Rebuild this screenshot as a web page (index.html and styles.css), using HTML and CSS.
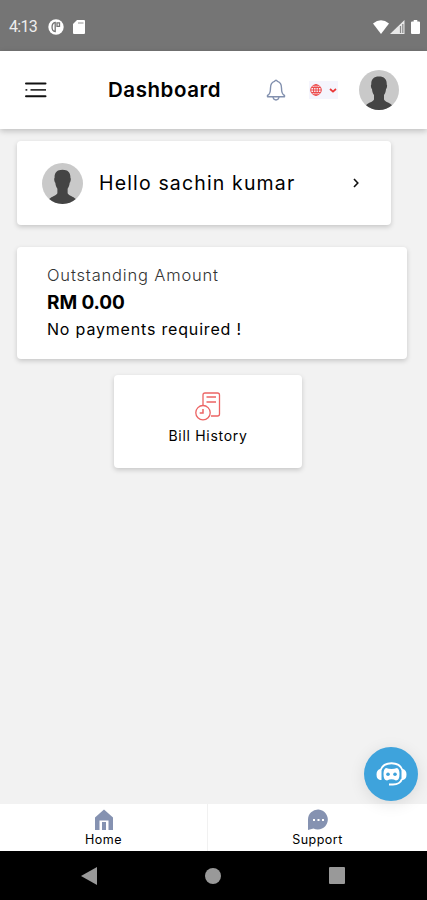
FILE: index.html
```
<!DOCTYPE html>
<html lang="en">
<head>
    <meta charset="UTF-8">
    <meta name="viewport" content="width=device-width, initial-scale=1.0">
    <title>Dashboard</title>
    <link rel="stylesheet" href="styles.css">
</head>
<body>
    <svg width="0" height="0" class="defs">
        <symbol id="avatar" viewBox="0 0 40 40">
            <circle cx="20" cy="20" r="20" fill="#c9c9c9"/>
            <path d="M20 6.500C14.500 6.500 12 9.500 12.300 14.500C11.500 15 12 18.500 13 19.200C13.300 22 14 23.500 15 25V29.500C14 32 9.500 32.500 7 35.200A20 20 0 0 0 33 35.200C30.500 32.500 26 32 25 29.500V25C26 23.500 26.700 22 27 19.200C28 18.500 28.500 15 27.700 14.500C28 9.500 25.500 6.500 20 6.500Z" fill="#444"/>
        </symbol>
    </svg>
    <div class="screen">
        <div class="status-bar">
            <span class="time">4:13</span>
            <svg class="status-app" width="16" height="16" viewBox="0 0 16 16">
                <circle cx="8" cy="8" r="7.700" fill="#fff"/>
                <path d="M7.200 3.500C3 3.500 3 12.500 7.200 12.500ZM9 3.800H11.500V7.300H9Z" fill="none" stroke="#757575" stroke-width="1.300"/>
            </svg>
            <svg class="status-card" width="12" height="14" viewBox="0 0 12 14">
                <path d="M4 0H11Q12 0 12 1V13Q12 14 11 14H1Q0 14 0 13V4Z" fill="#fff"/>
                <path d="M5 3H10.500" stroke="#aaa" stroke-width="1.300"/>
            </svg>
            <div class="status-right">
                <svg width="16" height="14" viewBox="0 0 16 14"><path d="M0 3.500Q8-3 16 3.500L8 14Z" fill="#fff"/></svg>
                <svg width="15" height="14" viewBox="0 0 15 14">
                    <path d="M0 14L14.500 0V14Z" fill="#e8e8e8"/>
                    <path d="M10.500 6V13M12.800 4V13" stroke="#888" stroke-width="1.200"/>
                </svg>
                <svg class="battery" width="9" height="14" viewBox="0 0 9 14"><path d="M2.700 0H6.300V1.500H8Q9 1.500 9 2.500V13Q9 14 8 14H1Q0 14 0 13V2.500Q0 1.500 1 1.500H2.700Z" fill="#fff"/></svg>
            </div>
        </div>

        <div class="header">
            <svg class="menu" width="22" height="16" viewBox="0 0 22 16">
                <path d="M1 1.500H20.500M1 14.200H20.500" stroke="#111" stroke-width="2" stroke-linecap="round"/>
                <path d="M5.500 7.900H21M0.500 7.900H2.300" stroke="#333" stroke-width="1.700"/>
            </svg>
            <h1>Dashboard</h1>
            <svg class="bell" width="20" height="22" viewBox="0 0 20 22" fill="none" stroke="#8290ae" stroke-width="1.400" stroke-linejoin="round">
                <path d="M8.500 2.400Q10 0 11.500 2.400C14.500 3.200 15.500 5.500 15.500 9C15.500 13.500 16 15.500 18.500 16.500V17.800H1.500V16.500C4 15.500 4.500 13.500 4.500 9C4.500 5.500 5.500 3.200 8.500 2.400Z"/>
                <path d="M7 18Q7.500 21 10 21Q12.500 21 13 18"/>
            </svg>
            <div class="language">
                <svg width="12" height="12" viewBox="0 0 12 12" fill="none" stroke="#ee4b4b" stroke-width="1">
                    <circle cx="6" cy="6" r="5.300"/>
                    <ellipse cx="6" cy="6" rx="2.500" ry="5.300"/>
                    <path d="M6 .7V11.300M.7 6H11.300M1.500 3.500H10.500M1.500 8.500H10.500"/>
                </svg>
                <svg width="8" height="5" viewBox="0 0 8 5"><path d="M1 1L4 3.700L7 1" fill="none" stroke="#ea3737" stroke-width="1.700"/></svg>
            </div>
            <svg class="profile" width="40" height="40"><use href="#avatar"/></svg>
        </div>

        <div class="content">
            <div class="card greeting">
                <svg width="41" height="41"><use href="#avatar"/></svg>
                <span class="greeting-name">Hello sachin kumar</span>
                <svg class="chevron" width="6" height="10" viewBox="0 0 6 10"><path d="M1 1L4.800 5L1 9" fill="none" stroke="#111" stroke-width="1.600"/></svg>
            </div>
            <div class="card outstanding">
                <div class="label">Outstanding Amount</div>
                <div class="amount">RM 0.00</div>
                <div class="note">No payments required !</div>
            </div>
            <div class="card bill">
                <svg width="26" height="29" viewBox="0 0 26 29" fill="none" stroke="#ec6464" stroke-width="1.300">
                    <path d="M8 13V3Q8 1 10 1H22.500Q24.500 1 24.500 3V22Q24.500 24 22.500 24H16"/>
                    <path d="M11.500 5H21M11.500 10H21"/>
                    <circle cx="8" cy="20.700" r="7.200"/>
                    <path d="M8 17V21H4.700" stroke-width="1.500"/>
                </svg>
                <span>Bill History</span>
            </div>
        </div>

        <div class="tabs">
            <div class="tab">
                <svg width="20" height="22" viewBox="0 0 20 22">
                    <path d="M10 .5L19 8.500V21H14.500V11.500H5.500V21H1V8.500Z" fill="#8592b1"/>
                    <path d="M8 13H12V21H8Z" fill="#8592b1"/>
                </svg>
                <span>Home</span>
            </div>
            <div class="tab">
                <svg width="22" height="22" viewBox="0 0 22 22">
                    <path d="M11.500 .5A10 10 0 1 1 6.500 19.500L1 21V10.500A10 10 0 0 1 11.500 .5Z" fill="#8592b1"/>
                    <path d="M6 11H8M10.500 11H12.500M15 11H17" stroke="#fff" stroke-width="2"/>
                </svg>
                <span>Support</span>
            </div>
            <div class="chat">
                <svg width="31" height="25" viewBox="0 0 31 25">
                    <path d="M4.500 8C8-1 23-1 26.500 8" fill="none" stroke="#fff" stroke-width="1.800"/>
                    <path d="M5.500 7V18H4Q.5 17 .5 12.500Q.5 8 4 7ZM25.500 7V18H27Q30.500 17 30.500 12.500Q30.500 8 27 7Z" fill="#fff"/>
                    <path d="M26 17Q24 22.500 17 22.500H13" fill="none" stroke="#fff" stroke-width="2"/>
                    <path d="M10 6Q15.500 8 21 6Q23.500 7 23.500 12Q23.500 18.500 20 18.500Q15.500 16 11 18.500Q7.500 18.500 7.500 12Q7.500 7 10 6Z" fill="#fff"/>
                    <circle cx="12" cy="12.300" r="1.800" fill="#3ea3dc"/>
                    <circle cx="19" cy="12.300" r="1.800" fill="#3ea3dc"/>
                </svg>
            </div>
        </div>

        <div class="system-nav">
            <svg width="16" height="18" viewBox="0 0 16 18"><path d="M0 9L16 0V18Z" fill="#999"/></svg>
            <svg width="16" height="16" viewBox="0 0 16 16"><circle cx="8" cy="8" r="8" fill="#999"/></svg>
            <svg width="16" height="17" viewBox="0 0 16 17"><rect width="16" height="17" rx="1" fill="#999"/></svg>
        </div>
    </div>
</body>
</html>
```
FILE: styles.css
```
* {
    box-sizing: border-box;
}

body {
    margin: 0;
    background: #f2f2f2;
    color: #000;
    font-family: Inter, 'Open Sans', sans-serif;
}

svg {
    display: block;
    flex: none;
}

.defs {
    position: absolute;
}

.screen {
    display: flex;
    flex-direction: column;
    height: 900px;
    overflow: hidden;
    white-space: nowrap;
}

.status-bar {
    display: flex;
    align-items: center;
    height: 51px;
    padding: 2px 7px 0 9px;
    background: #757575;
}

.time {
    width: 39px;
    color: #eee;
    font-family: Roboto, sans-serif;
    font-size: 16px;
    letter-spacing: -0.7px;
}

.status-card {
    margin-left: 9px;
}

.status-right {
    display: flex;
    gap: 1px;
    margin-left: auto;
}

.battery {
    margin-left: 5px;
}

.header {
    display: flex;
    align-items: center;
    height: 78px;
    padding: 0 28px 0 25px;
    background: #fff;
    box-shadow: 0 2px 6px rgba(0, 0, 0, 0.22);
}

h1 {
    width: 158px;
    margin: -1px 0 0 61px;
    font-size: 20.5px;
    font-weight: 600;
    line-height: 26px;
    letter-spacing: 0.55px;
}

.language {
    display: flex;
    align-items: center;
    justify-content: space-between;
    width: 29px;
    height: 18px;
    margin: 0 21px 0 23px;
    padding: 0 1px;
    background: #f5f5fd;
}

.profile {
    margin-left: auto;
}

.content {
    flex: 1;
    padding: 12px 20px 0 17px;
}

.card {
    background: #fff;
    border-radius: 4px;
    box-shadow: 0 2px 5px rgba(0, 0, 0, 0.18);
}

.greeting {
    display: flex;
    align-items: center;
    width: 374px;
    height: 84px;
    padding: 0 32px 0 25px;
}

.greeting-name {
    margin-left: 16px;
    font-size: 19.5px;
    letter-spacing: 1.15px;
}

.chevron {
    margin-left: auto;
}

.outstanding {
    height: 112px;
    margin-top: 22px;
    padding: 15px 30px;
    line-height: 27px;
}

.label {
    color: #333;
    font-size: 16.5px;
    font-weight: 300;
    letter-spacing: 0.82px;
}

.amount {
    font-size: 19px;
    font-weight: 700;
    letter-spacing: -0.1px;
}

.note {
    line-height: 26px;
    font-size: 16px;
    letter-spacing: 0.82px;
}

.bill {
    display: flex;
    flex-direction: column;
    align-items: center;
    width: 188px;
    height: 93px;
    margin: 16px 0 0 97px;
    padding-top: 17px;
    font-size: 14px;
    line-height: 18px;
    letter-spacing: 0.7px;
}

.bill span {
    margin-top: 6px;
}

.tabs {
    position: relative;
    display: grid;
    grid-template-columns: 207px 220px;
    height: 47px;
    background: #fff;
}

.tab {
    display: flex;
    flex-direction: column;
    align-items: center;
    padding-top: 5px;
    font-size: 12.5px;
    line-height: 17px;
    letter-spacing: 0.45px;
}

.tab + .tab {
    border-left: 1px solid #f1f1f1;
}

.chat {
    position: absolute;
    top: -57px;
    right: 9px;
    display: flex;
    align-items: center;
    justify-content: center;
    width: 54px;
    height: 54px;
    border-radius: 50%;
    background: #3ea3dc;
    box-shadow: 0 3px 16px rgba(0, 0, 0, 0.1);
}

.system-nav {
    display: flex;
    align-items: center;
    justify-content: space-between;
    height: 49px;
    padding: 0 82px 0 81px;
    background: #000;
}
```
